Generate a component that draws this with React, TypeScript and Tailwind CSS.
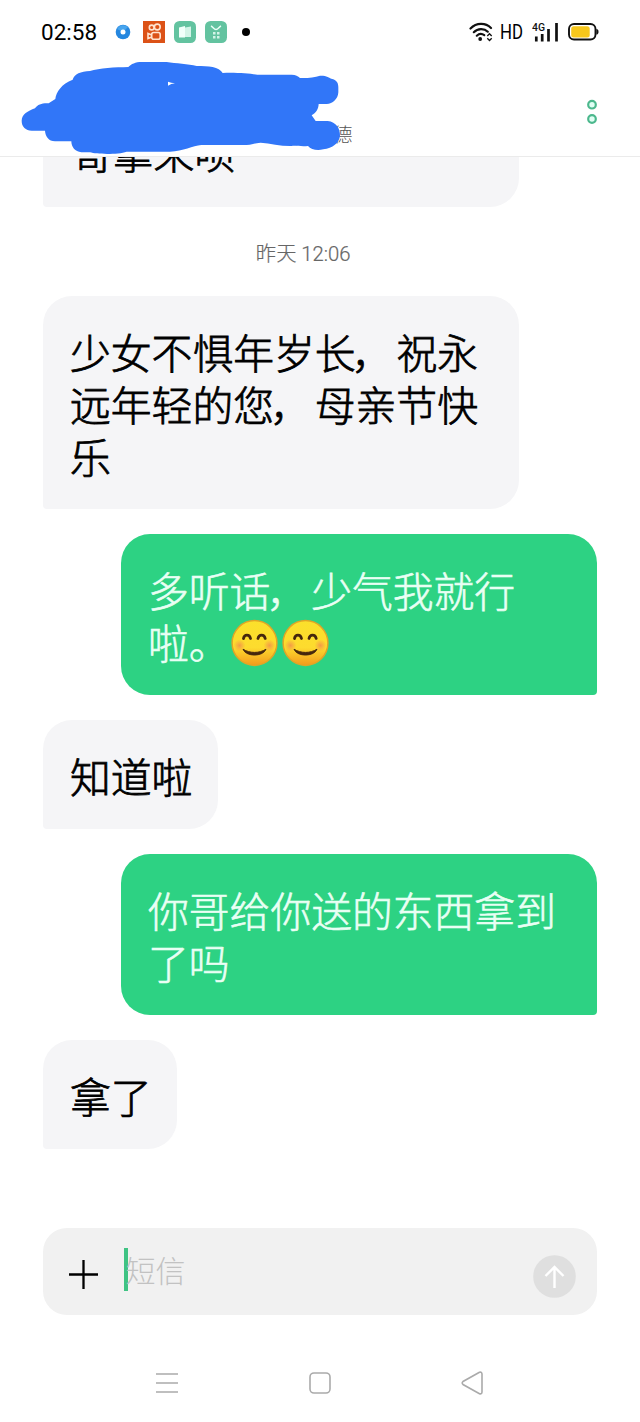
import type { ReactNode } from "react";

const FONT = "font-['Roboto','Noto_Sans_CJK_SC',sans-serif]";

function Emoji() {
  return (
    <svg className="inline-block h-[48px] w-[51px] align-[-0.5px] -my-2" viewBox="0 0 51 48">
      <defs>
        <linearGradient id="face" x1="0" y1="0" x2="0" y2="1">
          <stop offset="0" stopColor="#fbe02b" />
          <stop offset="0.6" stopColor="#fddb2e" />
          <stop offset="1" stopColor="#f39a1c" />
        </linearGradient>
        <radialGradient id="cheek">
          <stop offset="0" stopColor="#f0884e" stopOpacity="0.75" />
          <stop offset="1" stopColor="#f0884e" stopOpacity="0" />
        </radialGradient>
      </defs>
      <circle cx="24.500" cy="24" r="22.4" fill="url(#face)" stroke="#e0a526" strokeWidth="1.5" />
      <circle cx="9.500" cy="26.5" r="6" fill="url(#cheek)" />
      <circle cx="39.500" cy="26.5" r="6" fill="url(#cheek)" />
      <path d="M13.500 19.500c.8-4.500 6-4.500 7 0M28 19.500c.9-4.500 6.200-4.500 7.200 0" fill="none" stroke="#45270d" strokeWidth="2.8" strokeLinecap="round" />
      <path d="M13 30.200c7 4.300 16 4.300 23 0C33 38 16 38 13 30.200z" fill="#45270d" stroke="#45270d" strokeWidth="1" strokeLinejoin="round" />
    </svg>
  );
}

function Comma() {
  return <span className="-ml-[4px] mr-[4px]">，</span>;
}

function Received({ children, wide }: { children: ReactNode; wide?: boolean }) {
  return (
    <div className={`shrink-0 self-start rounded-[29px] rounded-bl-[4px] bg-[#f5f5f7] pt-[32.5px] pb-[24.5px] pl-[27.5px] text-[40.8px] leading-[52px] font-light text-black [-webkit-text-stroke:0.8px_#000] ${wide ? "w-[476px] pr-[24px]" : "pr-[25.500px]"}`}>
      {children}
    </div>
  );
}

function Sent({ children }: { children: ReactNode }) {
  return (
    <div className="w-[476px] shrink-0 self-end rounded-[29px] rounded-br-[4px] bg-[#2dd283] pt-[32.5px] pr-[24px] pb-[24.5px] pl-[27px] text-[40.8px] leading-[52px] font-light text-[#e9fff4] [-webkit-text-stroke:0.6px_#e9fff4]">
      {children}
    </div>
  );
}

function StatusBar() {
  return (
    <div className="flex h-16 items-center pl-[41px] text-black">
      <span className="w-[74px] text-[22.5px] leading-none">02:58</span>
      <svg className="h-4 w-4" viewBox="0 0 16 16">
        <circle cx="8" cy="8" r="7.300" fill="#2587df" />
        <path d="M2 5A7 7 0 0 1 13 3L8 8z" fill="#48a5ee" />
        <circle cx="8" cy="8" r="2.500" fill="#fff" />
      </svg>
      <svg className="ml-[12px] h-[22px] w-[22px]" viewBox="0 0 22 22">
        <rect width="22" height="22" fill="#dc5217" />
        <g fill="none" stroke="#ffe3cf" strokeWidth="1.600">
          <circle cx="8.700" cy="6.500" r="2.400" />
          <circle cx="14.300" cy="6" r="2.900" />
          <rect x="8.700" y="11.500" width="8.500" height="6.800" rx="2" />
          <path d="M8.700 14L5 12.500V17.500L8.700 16" />
        </g>
      </svg>
      <svg className="ml-[9px] h-[22px] w-[22px]" viewBox="0 0 22 22">
        <rect width="22" height="22" rx="5.500" fill="#63c3a0" />
        <path d="M5 6.500L11 5v11.500H5z" fill="#f1fffa" />
        <path d="M11 6.500l6-1V16h-6z" fill="#d3f4e7" />
      </svg>
      <svg className="ml-[9px] h-[22px] w-[22px]" viewBox="0 0 22 22">
        <rect width="22" height="22" rx="5.500" fill="#63c3a0" />
        <path d="M6 5c2 1 3 3.500 5 3.500S14 6 16 5" fill="none" stroke="#eafff7" strokeWidth="1.500" />
        <path d="M8 11h2.500v2.500H8zM12 11h2.500v2.500H12zM8 15h2.500v2.500H8zM12 15h2.500v2.500H12z" fill="#d3f4e7" />
      </svg>
      <span className="ml-[15px] h-[8px] w-[8px] rounded-full bg-black" />
      <svg className="ml-[219px] h-[22px] w-[25px]" viewBox="0 0 25 22">
        <g fill="none" stroke="#111" strokeWidth="2.200" strokeLinecap="round">
          <path d="M1.500 7.500C7.500 1.500 16.500 1.500 22 7" />
          <path d="M4.800 11.200c4-4 10.400-4 14 -.500" />
          <path d="M7.800 14.700c2.400-2.200 5.200-2.200 7.500-.500" />
        </g>
        <circle cx="11.200" cy="18" r="1.900" fill="#111" />
        <path d="M18.300 15l2.200-2.300 2.200 2.300M18.300 17.200l2.200 2.300 2.200-2.300" fill="none" stroke="#111" strokeWidth="1.300" />
      </svg>
      <span className="ml-[6px] w-[32px] origin-left scale-x-[0.84] text-[20px] leading-none">HD</span>
      <svg className="h-[24px] w-[28px]" viewBox="0 0 28 24">
        <text x="0" y="11" fontSize="11" fontFamily="Roboto" fontWeight="500" fill="#111" textLength="13" lengthAdjust="spacingAndGlyphs">4G</text>
        <path d="M4.300 16.500v5M10.200 14v7.500M16.500 9v12.500M24.500 3v18.500" stroke="#111" strokeWidth="2.700" />
      </svg>
      <svg className="ml-[8px] h-[18px] w-[31px]" viewBox="0 0 31 18">
        <rect x="1" y="1" width="26.500" height="15.500" rx="5" fill="#fff" stroke="#111" strokeWidth="1.900" />
        <rect x="3.200" y="3.200" width="18.500" height="11.200" rx="2.500" fill="#f7c71c" />
        <path d="M28.300 6q2.200 0 2.200 2.800t-2.200 2.800z" fill="#111" />
      </svg>
    </div>
  );
}

function Header() {
  return (
    <header className="relative h-[157px] shrink-0 border-b-[1.500px] border-[#ebebeb] bg-white">
      <StatusBar />
      <div className="flex h-[92px] justify-between pr-[42px] pl-[333px]">
        <span className="pt-[62px] text-[19.500px] leading-[20px] font-light text-[#555]">德</span>
        <svg className="mt-[35px] h-[26px] w-[12px]" viewBox="0 0 12 26">
          <circle cx="6" cy="5.700" r="3.800" fill="#e0fff4" stroke="#4cb88d" strokeWidth="2.200" />
          <circle cx="6" cy="20" r="3.800" fill="#e0fff4" stroke="#4cb88d" strokeWidth="2.200" />
        </svg>
      </div>
      <svg className="absolute top-[55px] left-[10px] h-[100px] w-[360px]" viewBox="0 0 1080 300">
        <path
          fill="#3176f8"
          fillRule="evenodd"
          d="M35 197C36 178 53 168 75 160C84 148 96 144 116 145L136 132C138 112 155 86 188 74C193 57 212 49 240 48C268 39 315 37 355 36C364 27 376 21 395 21H470C497 25 535 27 560 33C594 33 628 35 638 54C678 52 719 56 742 59H845C857 59 864 64 870 69C893 70 913 67 930 62C948 61 959 68 964 71C981 75 985 84 985 97V112C984 132 968 147 950 147H926C925 163 918 173 905 181L917 198H953C979 201 990 220 990 242C988 263 968 280 940 283C920 288 903 283 894 273C872 275 855 271 845 273C814 274 782 265 752 263C733 264 730 269 710 270H574C548 273 520 288 480 290H350C325 299 260 298 240 292H214C195 290 184 276 184 259H135C116 258 106 244 105 227H65C47 226 35 216 35 197ZM474 80V92Q483 86 495 85Q483 84 474 80Z"
        />
      </svg>
    </header>
  );
}

function Composer() {
  return (
    <div className="mr-[43px] ml-[42.500px] flex h-[87px] shrink-0 items-center rounded-[24px] bg-[#f1f1f1] pt-[6px] pr-[21px] pl-[26.500px]">
      <svg className="h-[29px] w-[29px]" viewBox="0 0 29 29">
        <path d="M0 14.500h29M14.500 0v29" stroke="#000" strokeWidth="2.300" />
      </svg>
      <div className="ml-[26px] flex h-[43px] flex-1 items-center self-start mt-[14px]">
        <span className="h-[43px] w-[4px] bg-[#3fc383]" />
        <span className="-ml-[2.500px] pt-[4px] text-[30px] leading-[43px] font-light text-[#c2c2c2]">短信</span>
      </div>
      <svg className="mt-[4px] h-[43px] w-[43px]" viewBox="0 0 43 43">
        <circle cx="21.500" cy="21.500" r="21.300" fill="#dfdfdf" />
        <path d="M21.500 33V12M12.500 21l9-9 9 9" fill="none" stroke="#fff" strokeWidth="2.400" />
      </svg>
    </div>
  );
}

function NavBar() {
  return (
    <nav className="mt-[56px] flex justify-between pr-[157px] pl-[156px]">
      <svg className="h-[24px] w-[22px]" viewBox="0 0 22 24">
        <path d="M0 3h22M0 12h22M0 21h22" stroke="#aaa" strokeWidth="1.600" />
      </svg>
      <svg className="h-[24px] w-[22px]" viewBox="0 0 22 24">
        <rect x="1" y="2" width="20" height="20" rx="4" fill="none" stroke="#aaa" strokeWidth="1.600" />
      </svg>
      <svg className="h-[24px] w-[22px]" viewBox="0 0 22 24">
        <path d="M18.500 1.300L2 10.500Q.4 12 2 13.500L18.500 22.700Q20.800 23.500 21 21V3Q20.800.5 18.500 1.300z" fill="none" stroke="#aaa" strokeWidth="1.600" />
      </svg>
    </nav>
  );
}

export default function App() {
  return (
    <div lang="zh-CN" className={`flex h-[1422px] w-[640px] flex-col overflow-hidden bg-white ${FONT}`}>
      <Header />
      <main className="flex h-[992px] shrink-0 flex-col justify-end gap-[25px] overflow-hidden pr-[43px] pl-[42.500px]">
        <Received wide>
          <div className="-mt-[2px] mb-[2px] pl-[2px]">哥拿来呗</div>
        </Received>
        <div className="-my-[25px] flex h-[89px] shrink-0 items-center justify-center pt-[6px] text-[20.300px] font-light text-[#666]">
          <span className="-ml-[33px] [-webkit-text-stroke:0.2px_#666]">昨天 12:06</span>
        </div>
        <Received wide>
          少女不惧年岁长<Comma />祝永远年轻的您<Comma />母亲节快乐
        </Received>
        <Sent>
          多听话<Comma />少气我就行啦。
          <Emoji />
          <Emoji />
        </Sent>
        <Received>知道啦</Received>
        <Sent>你哥给你送的东西拿到了吗</Sent>
        <Received>拿了</Received>
      </main>
      <div className="h-[79px] shrink-0" />
      <Composer />
      <NavBar />
    </div>
  );
}
